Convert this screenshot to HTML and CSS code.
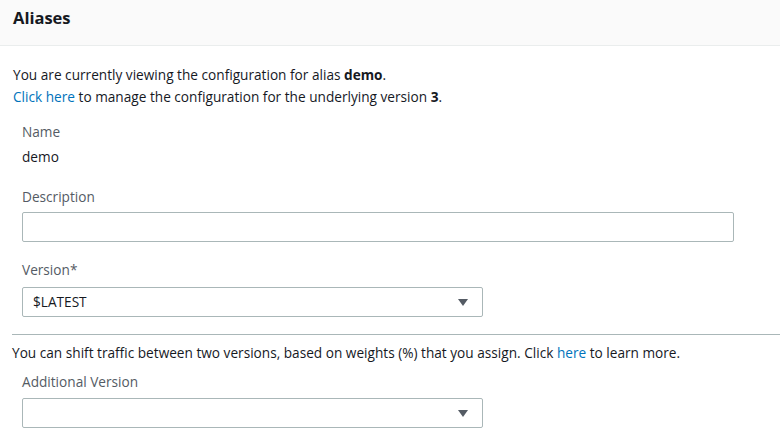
FILE: index.html
```html
<!DOCTYPE html>
<html>
<head>
<meta charset="utf-8">
<link rel="stylesheet" href="styles.css">
</head>
<body>
<div class="header"><h1 class="title">Aliases</h1></div>
<div class="content">
  <p class="intro">You are currently viewing the configuration for alias <b>demo</b>.<br><a class="link">Click here</a> to manage the configuration for the underlying version <b>3</b>.</p>
  <div class="fields">
    <div class="label label-name">Name</div>
    <div class="value">demo</div>
    <div class="label label-desc">Description</div>
    <div class="input input-wide"></div>
    <div class="label label-version">Version*</div>
    <div class="input select"><span class="select-text">$LATEST</span><span class="caret"></span></div>
  </div>
  <div class="divider"></div>
  <p class="shift">You can shift traffic between two versions, based on weights (%) that you assign. Click <a class="link">here</a> to learn more.</p>
  <div class="fields">
    <div class="label label-additional">Additional Version</div>
    <div class="input select select-additional"><span class="select-text"></span><span class="caret"></span></div>
  </div>
</div>
</body>
</html>
```
FILE: styles.css
```css
* { box-sizing: border-box; }
html, body { margin: 0; padding: 0; background: #fff; }
body {
  font-family: "Open Sans", "Liberation Sans", sans-serif;
  font-size: 13.65px;
  color: #16191f;
  line-height: 22px;
}
.header {
  height: 46px;
  background: #fafafa;
  border-bottom: 1px solid #eaeded;
  padding: 6px 13px 0;
}
.title {
  margin: 0;
  font-size: 16.5px;
  font-weight: 700;
  line-height: 24px;
  color: #16191f;
}
.content { padding-left: 12px; }
.intro { margin: 18px 0 0 1px; }
.intro b { font-weight: 700; }
.link { color: #0073bb; text-decoration: none; }
.fields { padding-left: 10px; }
.label { color: #545b64; }
.label-name { margin-top: 13px; }
.value { margin-top: 3px; }
.label-desc { margin-top: 18px; }
.input {
  height: 30px;
  border: 1px solid #aab7b8;
  border-radius: 2px;
  background: #fff;
}
.input-wide { width: 712px; margin-top: 4px; }
.label-version { margin-top: 17px; }
.select {
  width: 461px;
  margin-top: 6px;
  display: flex;
  align-items: center;
  justify-content: space-between;
  padding: 0 14px 0 10px;
}
.select-text { color: #16191f; }
.caret {
  width: 0;
  height: 0;
  border-left: 5px solid transparent;
  border-right: 5px solid transparent;
  border-top: 7px solid #545b64;
}
.divider {
  margin-top: 17px;
  height: 1px;
  background: #aab7b8;
}
.shift { margin: 7px 0 0 0; }
.label-additional { margin-top: 7px; }
.select-additional { margin-top: 5px; }
```
